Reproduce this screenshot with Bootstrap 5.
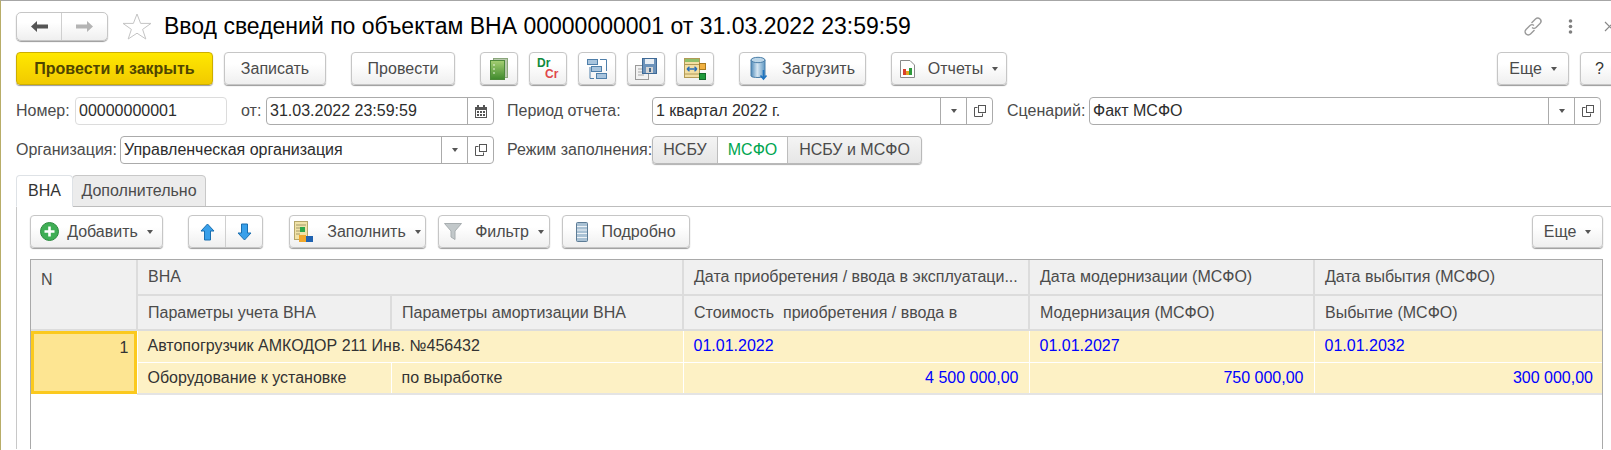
<!doctype html>
<html lang="ru">

<head>
	<meta charset="utf-8">
	<meta name="viewport" content="width=device-width, initial-scale=1">
	<title>Ввод сведений по объектам ВНА</title>
	<link href="https://cdn.jsdelivr.net/npm/bootstrap@5.3.5/dist/css/bootstrap.min.css" rel="stylesheet"
		crossorigin="anonymous">
	<style>
		html, body { height: 450px; overflow: hidden; }
		body { font-family: "Liberation Sans", Arial, sans-serif; font-size: 16px; color: #4b4b4b; background: #fff;
			border-top: 1px solid #a6a6a6; border-left: 1px solid #b8ad68; }
		.page-wrap { height: 449px; padding-left: 15px; }

		.top-row { height: 29px; margin-top: 11px; }
		.tool-row { height: 33px; margin-top: 11px; margin-right: -9px; }
		.form-row-a { height: 28px; margin-top: 12px; }
		.form-row-b { height: 28px; margin-top: 11px; }

		.ui-btn { display: inline-flex; align-items: center; justify-content: center; flex: none; height: 100%; padding: 0;
			font-size: 16px; color: #4b4b4b; border: 1px solid #c6c6c6; border-radius: 4px; white-space: nowrap;
			background: linear-gradient(#fff 35%, #efefef); box-shadow: 0 1px 1px #9a9a9a; }
		.ui-btn:hover { color: #4b4b4b; border-color: #c6c6c6; background: linear-gradient(#fff 35%, #efefef); }
		.ui-btn.yellow-btn { width: 197px; font-weight: 700; color: #4f4500; border-color: #cdae00;
			background: linear-gradient(#ffe800, #f1ca00); }
		.caret-down { display: inline-block; width: 0; height: 0; margin-left: 9px; border: 3px solid transparent;
			border-top: 4px solid #555; border-bottom: 0; }
		.ic-gap { margin-right: 13px; }

		.nav-group { width: 92px; display: flex; height: 29px; border: 1px solid #c6c6c6; border-radius: 5px;
			background: linear-gradient(#fff 35%, #efefef); box-shadow: 0 1px 1px #9a9a9a; }
		.nav-group > div { display: flex; align-items: center; justify-content: center; }
		.nav-back { width: 45px; border-right: 1px solid #cfcfcf; }
		.nav-fwd { flex: 1; }
		.star-ic { margin-left: 14px; }
		.doc-title { margin: 0 0 0 12px; font-size: 23px; font-weight: 400; line-height: 29px; color: #000; white-space: nowrap; }
		.head-icons { margin-left: auto; margin-right: -4px; }
		.head-kebab { margin-left: 25px; }
		.head-close { margin-left: 31px; }

		.w-write { width: 102px; margin-left: 11px; }
		.w-post { width: 104px; margin-left: 25px; }
		.w-ic { width: 38px; margin-left: 11px; }
		.w-ic.first-ic { margin-left: 25px; }
		.w-load { width: 127px; margin-left: 25px; }
		.w-rep { width: 116px; margin-left: 25px; }
		.w-more { width: 72px; }
		.w-help { width: 40px; margin-left: 11px; color: #333; justify-content: flex-start; padding-left: 14px; }
		.w-help:hover { color: #333; }

		.lbl { flex: none; white-space: nowrap; }
		.lbl-num { width: 59px; }
		.lbl-from { width: 25px; margin-left: 14px; }
		.lbl-period { width: 145px; margin-left: 13px; }
		.lbl-scen { width: 82px; margin-left: 14px; }
		.lbl-org { width: 104px; }

		.fld { display: flex; flex: none; height: 100%; border: 1px solid #ababab; border-radius: 4px; background: #fff; color: #2d2d2d; }
		.fld-txt { flex: 1; padding-left: 3px; line-height: 26px; white-space: nowrap; overflow: hidden; }
		.fld-btn { flex: none; width: 26px; display: flex; align-items: center; justify-content: center; border-left: 1px solid #ababab; }
		.fld-num { width: 152px; border-color: #dcdcdc; }
		.fld-date { width: 228px; }
		.fld-period { width: 341px; }
		.fld-scen { width: 512px; }
		.fld-org { width: 374px; }

		.mode-switch { display: flex; width: 270px; height: 100%; border: 1px solid #b9b9b9; border-radius: 4px; overflow: hidden;
			background: linear-gradient(#f4f4f4, #e6e6e6); box-shadow: 0 1px 1px #b0b0b0; }
		.mode-switch > div { display: flex; align-items: center; justify-content: center; border-right: 1px solid #bdbdbd; }
		.mode-switch > div:last-child { border-right: 0; }
		.mode-a { width: 65px; }
		.mode-b { width: 70px; background: #fff; color: #00a651; }
		.mode-c { flex: 1; }

		.tab-strip { margin-top: 11px; height: 31px; border-bottom: 0; padding: 0; flex-wrap: nowrap; }
		.tab-strip .nav-link { height: 32px; padding: 0; display: flex; align-items: center; justify-content: center; color: #4b4b4b;
			border: 1px solid #c8c8c8; border-radius: 4px 4px 0 0; margin: 0; background: #ececec; }
		.tab-strip .nav-link.active { width: 57px; background: #fff; color: #333; border-bottom-color: #fff; position: relative; z-index: 1; }
		.tab-extra { width: 134px; margin-left: -1px !important; }

		.tab-body { height: 243px; border-top: 1px solid #bdbdbd; border-left: 1px solid #c8c8c8; margin-right: -20px; padding: 8px 0 0 13px; }
		.list-bar { height: 33px; width: 1573px; }
		.w-add { width: 133px; }
		.arrow-pair { display: flex; flex: none; width: 75px; height: 100%; margin-left: 25px; border: 1px solid #c6c6c6; border-radius: 4px;
			background: linear-gradient(#fff 35%, #efefef); box-shadow: 0 1px 1px #9a9a9a; }
		.arrow-pair > div { flex: 1; display: flex; align-items: center; justify-content: center; }
		.arrow-pair > div:first-child { border-right: 1px solid #cfcfcf; }
		.w-fill { width: 137px; margin-left: 26px; }
		.w-filter { width: 112px; margin-left: 12px; }
		.w-detail { width: 128px; margin-left: 12px; }
		.w-more2 { width: 71px; }

		.grid-box { width: 1573px; height: 190px; margin-top: 11px; border: 1px solid #a9a9a9; border-bottom: 0; overflow: hidden; }
		.doc-grid { table-layout: fixed; width: 1572px; margin: 0; border-collapse: collapse; font-size: 16px; }
		.doc-grid th, .doc-grid td { padding: 0 10px; height: 35px; font-weight: 400; vertical-align: middle; white-space: nowrap;
			overflow: hidden; box-shadow: none; }
		.doc-grid th { background: #f0f0f0; color: #4b4b4b; border: 2px solid #dcdcdc; border-top: 0; }
		.doc-grid tr > :first-child { border-left: 0; }
		.doc-grid tr > :last-child { border-right: 0; }
		.doc-grid td { height: 32px; background: #fdf1c5; color: #333; border: 1px solid #fff; }
		.doc-grid tbody tr:first-child td { border-top: 2px solid #e8e8e8; }
		.doc-grid tbody tr:last-child td { border-bottom: 2px solid #e4e4e4; }
		.doc-grid th.cell-n { vertical-align: top; padding-top: 8px; }
		.doc-grid td.cell-sel { background: #fde592; box-shadow: inset 0 0 0 3px #fbc91e; text-align: right; vertical-align: top; padding: 5px 8px 0 0; line-height: 24px; }
		.doc-grid td.val-blue { color: #0000ff; }
		.col-n { width: 106px; }
		.col-p1 { width: 254px; }
		.col-p2 { width: 292px; }
		.col-d1 { width: 346px; }
		.col-d2 { width: 285px; }
		.col-d3 { width: 289px; }
	</style>
</head>

<body>
	<svg width="0" height="0" class="d-block">
		<symbol id="copyIc" viewBox="0 0 14 14">
			<path d="M4.5 3.5H1.5V12.5H9.5V9.5" fill="none" stroke="#555" />
			<rect x="5.5" y="1.5" width="7" height="7" fill="#fff" stroke="#555" />
		</symbol>
	</svg>

	<div class="page-wrap d-flex flex-column">
		<div class="top-row d-flex align-items-center">
			<div class="nav-group flex-none">
				<div class="nav-back">
					<svg width="19" height="13" viewBox="0 0 19 13"><path d="M7 1 1 6.5 7 12V8.5H18V4.5H7Z" fill="#555" /></svg>
				</div>
				<div class="nav-fwd">
					<svg width="19" height="13" viewBox="0 0 19 13"><path d="M12 1 18 6.5 12 12V8.5H1V4.5H12Z" fill="#b4b4b4" /></svg>
				</div>
			</div>
			<svg class="star-ic flex-none" width="30" height="27" viewBox="0 0 30 27">
				<path d="M15 1 18.6 10.4H29L20.6 16.4 23.8 26 15 20.2 6.2 26 9.4 16.4 1 10.4H11.4Z" fill="#fff" stroke="#c4c4c4" />
			</svg>
			<h1 class="doc-title">Ввод сведений по объектам ВНА 00000000001 от 31.03.2022 23:59:59</h1>
			<div class="head-icons d-flex align-items-center">
				<svg width="20" height="21" viewBox="0 0 20 21" fill="none" stroke="#9a9a9a" stroke-width="1.4">
					<path d="M8.5 7 12.5 3a3 3 0 0 1 4.5 4.5L13 11.5a3 3 0 0 1-4 0" />
					<path d="M11.5 14 7.5 18A3 3 0 0 1 3 13.5L7 9.5a3 3 0 0 1 4 0" />
				</svg>
				<svg class="head-kebab" width="5" height="15" viewBox="0 0 5 15" fill="#808080">
					<circle cx="2.5" cy="2" r="1.8" /><circle cx="2.5" cy="7.5" r="1.8" /><circle cx="2.5" cy="13" r="1.8" />
				</svg>
				<svg class="head-close" width="11" height="11" viewBox="0 0 11 11" stroke="#888" stroke-width="1.2"><path d="M1 1 10 10M10 1 1 10" /></svg>
			</div>
		</div>

		<div class="tool-row d-flex align-items-center">
			<button type="button" class="btn ui-btn yellow-btn">Провести и закрыть</button>
			<button type="button" class="btn ui-btn w-write">Записать</button>
			<button type="button" class="btn ui-btn w-post">Провести</button>
			<button type="button" class="btn ui-btn w-ic first-ic">
				<svg width="18" height="22" viewBox="0 0 18 22">
					<defs><linearGradient id="gBook" x1="0" x2="0" y1="0" y2="1"><stop offset="0" stop-color="#a5cf73" /><stop offset="1" stop-color="#3f8a2c" /></linearGradient></defs>
					<rect x="3.5" y="0.5" width="14" height="19" fill="#b9c9ae" stroke="#8aa67a" />
					<rect x="0.5" y="2.5" width="14" height="19" fill="url(#gBook)" stroke="#4d8a3a" />
					<path d="M3 7H5M3 11H5M3 15H5" stroke="#e6f3d8" />
				</svg>
			</button>
			<button type="button" class="btn ui-btn w-ic">
				<svg width="24" height="24" viewBox="0 0 24 24" font-family="Liberation Sans, Arial, sans-serif" font-size="12" font-weight="700">
					<text x="1" y="10" fill="#0f8a3c">Dr</text>
					<text x="9" y="21" fill="#e0464a">Cr</text>
				</svg>
			</button>
			<button type="button" class="btn ui-btn w-ic">
				<svg width="22" height="22" viewBox="0 0 22 22" stroke="#4f7faa">
					<path d="M4 9V20.5H8M14 1.5H20.5V13" fill="none" />
					<rect x="1.5" y="1.5" width="10" height="5" fill="#a8c4dd" />
					<rect x="5.5" y="8.5" width="10" height="5" fill="#a8c4dd" />
					<rect x="10.5" y="15.5" width="10" height="5" fill="#a8c4dd" />
				</svg>
			</button>
			<button type="button" class="btn ui-btn w-ic">
				<svg width="22" height="22" viewBox="0 0 22 22">
					<rect x="0.5" y="7.5" width="13" height="14" fill="#f2f2f2" stroke="#9a9a9a" />
					<path d="M3 11H9M3 14H9M3 17H9" stroke="#a8a8a8" />
					<rect x="7.5" y="0.5" width="14" height="15" fill="#6d93ba" stroke="#3f6a96" />
					<rect x="10" y="1" width="9" height="5" fill="#e8eef4" />
					<rect x="11" y="9" width="7" height="6" fill="#d5d5d5" />
					<rect x="14" y="10" width="2" height="4" fill="#44688c" />
				</svg>
			</button>
			<button type="button" class="btn ui-btn w-ic">
				<svg width="22" height="22" viewBox="0 0 22 22">
					<rect x="0.5" y="0.5" width="15" height="19" fill="#f3dfa3" stroke="#b29a56" />
					<rect x="1" y="1" width="14" height="3" fill="#8fbf6a" />
					<path d="M1 6.5H15M1 16H15" stroke="#b29a56" />
					<path d="M3 11H13M3 11 5.5 8.8M3 11 5.5 13.2M13 11 10.5 8.8M13 11 10.5 13.2" fill="none" stroke="#2a6fb8" stroke-width="1.4" />
					<rect x="15.5" y="5.5" width="6" height="6" fill="#f0b040" stroke="#a87a20" />
					<rect x="15.5" y="15.5" width="6" height="6" fill="#1f9a3a" stroke="#14692a" />
				</svg>
			</button>
			<button type="button" class="btn ui-btn w-load">
				<svg class="ic-gap" width="19" height="25" viewBox="0 0 19 25">
					<defs><linearGradient id="gCyl" x1="0" x2="1" y1="0" y2="0"><stop offset="0" stop-color="#4b88b8" /><stop offset="0.45" stop-color="#d5e6f2" /><stop offset="1" stop-color="#5e97c2" /></linearGradient></defs>
					<path d="M1 4V20C1 22 15 22 15 20V4Z" fill="url(#gCyl)" stroke="#4a7ea8" />
					<ellipse cx="8" cy="4" rx="7" ry="2.7" fill="#bcd6e8" stroke="#4a7ea8" />
					<path d="M13.5 14V22M10.5 19.5 13.5 23 16.5 19.5" fill="none" stroke="#1f74c0" stroke-width="1.6" />
				</svg>
				Загрузить
			</button>
			<button type="button" class="btn ui-btn w-rep">
				<svg class="ic-gap" width="15" height="18" viewBox="0 0 15 18">
					<path d="M.5.5H10L14.5 5V17.5H.5Z" fill="#fff" stroke="#8a8a8a" />
					<rect x="3" y="9" width="3" height="6" fill="#d9402c" />
					<rect x="6" y="11" width="3" height="4" fill="#e2a51f" />
					<rect x="9" y="8" width="3" height="7" fill="#2f9a3c" />
				</svg>
				Отчеты<span class="caret-down"></span>
			</button>
			<button type="button" class="btn ui-btn w-more ms-auto">Еще<span class="caret-down"></span></button>
			<button type="button" class="btn ui-btn w-help">?</button>
		</div>

		<div class="form-row-a d-flex align-items-center">
			<span class="lbl lbl-num">Номер:</span>
			<div class="fld fld-num"><div class="fld-txt">00000000001</div></div>
			<span class="lbl lbl-from">от:</span>
			<div class="fld fld-date">
				<div class="fld-txt">31.03.2022 23:59:59</div>
				<div class="fld-btn">
					<svg width="12" height="13" viewBox="0 0 12 13" fill="#555">
						<path d="M0 2H2V0H4V2H8V0H10V2H12V13H0ZM1 5V12H11V5Z" />
						<path d="M2 6H4V8H2ZM5 6H7V8H5ZM8 6H10V8H8ZM2 9H4V11H2ZM5 9H7V11H5ZM8 9H10V11H8Z" />
					</svg>
				</div>
			</div>
			<span class="lbl lbl-period">Период отчета:</span>
			<div class="fld fld-period">
				<div class="fld-txt">1 квартал 2022 г.</div>
				<div class="fld-btn"><span class="caret-down m-0"></span></div>
				<div class="fld-btn"><svg width="14" height="14"><use href="#copyIc" /></svg></div>
			</div>
			<span class="lbl lbl-scen">Сценарий:</span>
			<div class="fld fld-scen">
				<div class="fld-txt">Факт МСФО</div>
				<div class="fld-btn"><span class="caret-down m-0"></span></div>
				<div class="fld-btn"><svg width="14" height="14"><use href="#copyIc" /></svg></div>
			</div>
		</div>

		<div class="form-row-b d-flex align-items-center">
			<span class="lbl lbl-org">Организация:</span>
			<div class="fld fld-org">
				<div class="fld-txt">Управленческая организация</div>
				<div class="fld-btn"><span class="caret-down m-0"></span></div>
				<div class="fld-btn"><svg width="14" height="14"><use href="#copyIc" /></svg></div>
			</div>
			<span class="lbl lbl-period">Режим заполнения:</span>
			<div class="mode-switch">
				<div class="mode-a">НСБУ</div>
				<div class="mode-b">МСФО</div>
				<div class="mode-c">НСБУ и МСФО</div>
			</div>
		</div>

		<ul class="nav nav-tabs tab-strip">
			<li class="nav-item"><a class="nav-link active" href="#">ВНА</a></li>
			<li class="nav-item"><a class="nav-link tab-extra" href="#">Дополнительно</a></li>
		</ul>

		<div class="tab-body">
			<div class="list-bar d-flex align-items-center">
				<button type="button" class="btn ui-btn w-add">
					<svg class="me-2" width="19" height="19" viewBox="0 0 19 19">
						<circle cx="9.5" cy="9.5" r="9" fill="#3fae55" stroke="#2b8a3e" />
						<path d="M9.5 4.5V14.5M4.5 9.5H14.5" stroke="#fff" stroke-width="2.6" />
					</svg>
					Добавить<span class="caret-down"></span>
				</button>
				<div class="arrow-pair">
					<div><svg width="15" height="18" viewBox="0 0 15 18"><path d="M7.5 1 14 8H10.5V17H4.5V8H1Z" fill="#39a0ea" stroke="#1a6fb0" /></svg></div>
					<div><svg width="15" height="18" viewBox="0 0 15 18"><path d="M7.5 17 14 10H10.5V1H4.5V10H1Z" fill="#39a0ea" stroke="#1a6fb0" /></svg></div>
				</div>
				<button type="button" class="btn ui-btn w-fill">
					<svg class="ic-gap" width="20" height="22" viewBox="0 0 20 22">
						<rect x="0.5" y="0.5" width="13" height="18" fill="#f1e3a8" stroke="#b5a66a" />
						<path d="M2 4H12M2 7H6M2 10H6M2 13H6" stroke="#a49a6a" />
						<rect x="6" y="6" width="5" height="5" fill="#2da84a" />
						<rect x="5" y="14" width="7" height="7" fill="#f0a82c" />
						<rect x="12" y="15" width="7" height="6" fill="#1f62b0" />
					</svg>
					Заполнить<span class="caret-down"></span>
				</button>
				<button type="button" class="btn ui-btn w-filter">
					<svg class="ic-gap" width="18" height="17" viewBox="0 0 18 17"><path d="M.5.5H17.5L11 8V16.5L7 14V8Z" fill="#c2c8ca" stroke="#a8aeb0" /></svg>
					Фильтр<span class="caret-down"></span>
				</button>
				<button type="button" class="btn ui-btn w-detail">
					<svg class="ic-gap" width="12" height="20" viewBox="0 0 12 20" stroke="#5d7c96">
						<rect x="0.5" y="0.5" width="11" height="19" rx="1" fill="#a9c1d4" />
						<path d="M1 4.5H11M1 8H11M1 11.5H11M1 15.5H11" stroke="#eef3f7" stroke-width="1.2" />
					</svg>
					Подробно
				</button>
				<button type="button" class="btn ui-btn w-more2 ms-auto">Еще<span class="caret-down"></span></button>
			</div>

			<div class="grid-box">
				<table class="table doc-grid">
					<colgroup>
						<col class="col-n"><col class="col-p1"><col class="col-p2"><col class="col-d1"><col class="col-d2"><col class="col-d3">
					</colgroup>
					<thead>
						<tr>
							<th rowspan="2" class="cell-n">N</th>
							<th colspan="2">ВНА</th>
							<th>Дата приобретения / ввода в эксплуатаци...</th>
							<th>Дата модернизации (МСФО)</th>
							<th>Дата выбытия (МСФО)</th>
						</tr>
						<tr>
							<th>Параметры учета ВНА</th>
							<th>Параметры амортизации ВНА</th>
							<th>Стоимость&nbsp; приобретения / ввода в</th>
							<th>Модернизация (МСФО)</th>
							<th>Выбытие (МСФО)</th>
						</tr>
					</thead>
					<tbody>
						<tr>
							<td rowspan="2" class="cell-sel">1</td>
							<td colspan="2">Автопогрузчик АМКОДОР 211 Инв. №456432</td>
							<td class="val-blue">01.01.2022</td>
							<td class="val-blue">01.01.2027</td>
							<td class="val-blue">01.01.2032</td>
						</tr>
						<tr>
							<td>Оборудование к установке</td>
							<td>по выработке</td>
							<td class="val-blue text-end">4 500 000,00</td>
							<td class="val-blue text-end">750 000,00</td>
							<td class="val-blue text-end">300 000,00</td>
						</tr>
					</tbody>
				</table>
			</div>
		</div>
	</div>

	<script src="https://cdn.jsdelivr.net/npm/bootstrap@5.3.5/dist/js/bootstrap.bundle.min.js"
		crossorigin="anonymous"></script>
</body>

</html>
